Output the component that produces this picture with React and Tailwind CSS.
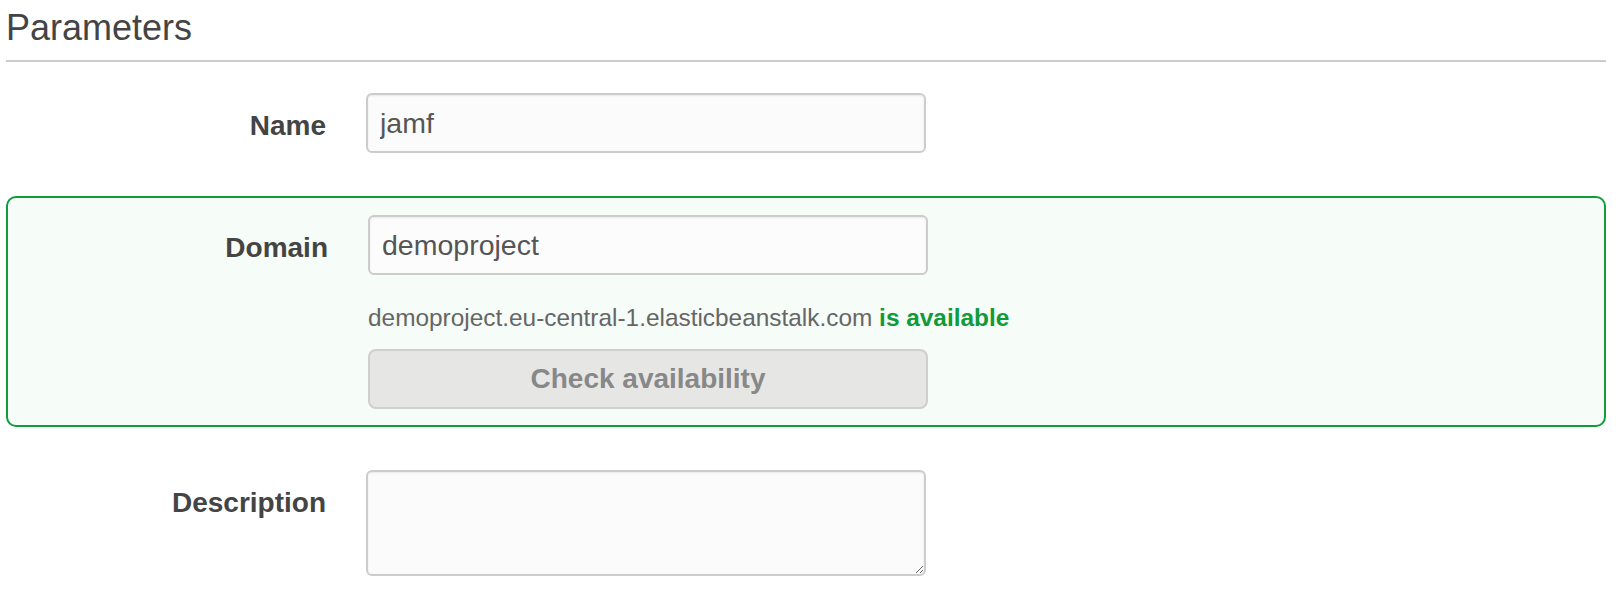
export default function App() {
  return (
    <div className="min-h-[592px] bg-white pl-[6px] pr-[12px] pt-[10px] font-['Liberation_Sans',Arial,sans-serif]">
      <h2 className="text-[36px] leading-[36px] text-[#444] pb-[14px] border-b-2 border-[#cccccc]">
        Parameters
      </h2>

      {/* Name */}
      <div className="mt-[31px] flex items-start gap-[40px]">
        <label className="w-[320px] h-[60px] pt-[5px] flex items-center justify-end text-[28px] font-bold text-[#444]">
          Name
        </label>
        <input
          type="text"
          defaultValue="jamf"
          className="w-[560px] h-[60px] px-[12px] text-[28.5px] text-[#555] bg-[#fbfbfb] border-2 border-[#cccccc] rounded-[6px] shadow-[inset_0_1px_2px_rgba(0,0,0,0.08)] focus:outline-none"
        />
      </div>

      {/* Domain */}
      <div className="mt-[43px] border-2 border-[#129b3b] rounded-[10px] bg-[#f6fcf7] pt-[17px] pb-[16px]">
        <div className="flex items-start gap-[40px]">
          <label className="w-[320px] h-[60px] pt-[5px] flex items-center justify-end text-[28px] font-bold text-[#444]">
            Domain
          </label>
          <div className="flex flex-col w-[560px]">
            <input
              type="text"
              defaultValue="demoproject"
              className="w-[560px] h-[60px] px-[12px] text-[28.5px] text-[#555] bg-[#fcfcfc] border-2 border-[#cccccc] rounded-[6px] shadow-[inset_0_1px_2px_rgba(0,0,0,0.08)] focus:outline-none"
            />
            <p className="mt-[26px] text-[24.4px] leading-[34px] text-[#666] whitespace-nowrap">
              demoproject.eu-central-1.elasticbeanstalk.com{" "}
              <span className="font-bold text-[#109a38]">is available</span>
            </p>
            <button
              type="button"
              className="mt-[14px] w-[560px] h-[60px] text-[28px] font-bold text-[#888] bg-[#e6e7e5] border-2 border-[#cfd0ce] rounded-[8px]"
            >
              Check availability
            </button>
          </div>
        </div>
      </div>

      {/* Description */}
      <div className="mt-[43px] flex items-start gap-[40px]">
        <label className="w-[320px] h-[60px] pt-[5px] flex items-center justify-end text-[28px] font-bold text-[#444]">
          Description
        </label>
        <textarea className="w-[560px] h-[106px] px-[12px] py-[8px] text-[28.5px] text-[#555] bg-[#fbfbfb] border-2 border-[#cccccc] rounded-[6px] shadow-[inset_0_1px_2px_rgba(0,0,0,0.08)] focus:outline-none" />
      </div>
    </div>
  );
}
